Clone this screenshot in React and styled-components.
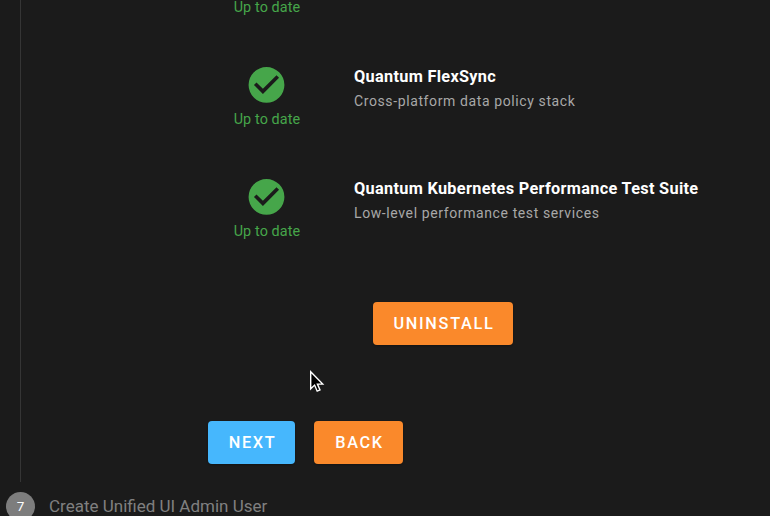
import React from "react";
import styled, { createGlobalStyle } from "styled-components";

const GlobalStyle = createGlobalStyle`
  * {
    box-sizing: border-box;
  }

  body {
    margin: 0;
    overflow: hidden;
    background: #1b1b1b;
    font-family: Roboto, "Liberation Sans", sans-serif;
  }
`

const Page = styled.main`
  position: relative;
  height: 516px;
  overflow: hidden;
  display: flex;
  flex-direction: column;
  background: #1b1b1b;
`

const StepContent = styled.section`
  height: 482px;
  flex: none;
  margin-left: 20px;
  border-left: 1px solid #353535;
  display: flex;
  flex-direction: column;
`

const ServiceList = styled.div`
  margin-top: -65px;
`

const ServiceRow = styled.div`
  height: 112px;
  display: grid;
  grid-template-columns: 120px 1fr;
  column-gap: 27px;
  padding-left: 186px;
`

const Status = styled.div`
  display: flex;
  flex-direction: column;
  align-items: center;
  padding-top: 16.3px;
  color: #46a64a;
`

const StatusIcon = styled.svg`
  width: 43px;
  height: 43px;
  flex: none;
  margin-right: 1px;
  fill: currentColor;
`

const StatusLabel = styled.span`
  margin-top: 3.7px;
  font-size: 14.4px;
  line-height: 20px;
  letter-spacing: 0.1px;
`

const Details = styled.div`
  padding-top: 18px;
`

const ServiceName = styled.h3`
  margin: 0;
  font-size: 16.3px;
  font-weight: 700;
  line-height: 24px;
  letter-spacing: 0.31px;
  color: #fff;
`

const ServiceText = styled.p`
  margin: 1px 0 0;
  font-size: 14px;
  line-height: 22px;
  letter-spacing: 0.61px;
  color: #a8a8a8;
`

const Button = styled.button`
  width: ${({ $width }) => $width}px;
  height: 43px;
  padding: 0 0 0 2px;
  border: 0;
  border-radius: 4px;
  background: ${({ $color }) => $color};
  box-shadow: 0 1px 2px rgba(0, 0, 0, 0.3);
  color: #fff;
  font-family: inherit;
  font-size: 16.3px;
  font-weight: 500;
  letter-spacing: 1.7px;
`

const ServiceActions = styled.div`
  padding: 31px 0 0 352px;
`

const StepActions = styled.div`
  display: flex;
  gap: 19px;
  padding: 76px 0 0 187px;
`

const StepHeader = styled.header`
  display: flex;
  align-items: center;
  gap: 14px;
  height: 29px;
  margin: 10px 0 0 6px;
  flex: none;
`

const StepNumber = styled.span`
  display: flex;
  align-items: center;
  justify-content: center;
  width: 29px;
  height: 29px;
  padding-bottom: 2px;
  border-radius: 50%;
  background: #7d7d7d;
  color: #fff;
  font-size: 13.5px;
`

const StepTitle = styled.span`
  padding-bottom: 2px;
  font-size: 17px;
  line-height: 20px;
  color: #808080;
`

const Cursor = styled.svg`
  position: absolute;
  left: 309px;
  top: 370px;
  width: 16px;
  height: 24px;
`

const services = [
  { id: "previous" },
  { id: "flexsync", name: "Quantum FlexSync", text: "Cross-platform data policy stack" },
  {
    id: "kubernetes",
    name: "Quantum Kubernetes Performance Test Suite",
    text: "Low-level performance test services",
  },
]

const Service = ({ name, text }) => (
  <ServiceRow>
    <Status>
      <StatusIcon viewBox="0 -0.25 24 24">
        <path d="M12 2a10 10 0 1 0 0 20 10 10 0 0 0 0-20M10 17l-5-5 1.41-1.41L10 14.17l7.59-7.59L19 8z" fillRule="evenodd" />
      </StatusIcon>
      <StatusLabel>Up to date</StatusLabel>
    </Status>
    {name && (
      <Details>
        <ServiceName>{name}</ServiceName>
        <ServiceText>{text}</ServiceText>
      </Details>
    )}
  </ServiceRow>
)

const App = () => (
  <>
    <GlobalStyle />
    <Page>
      <StepContent>
        <ServiceList>
          {services.map(({ id, name, text }) => (
            <Service key={id} name={name} text={text} />
          ))}
        </ServiceList>
        <ServiceActions>
          <Button $width={140} $color="#fa892b">UNINSTALL</Button>
        </ServiceActions>
        <StepActions>
          <Button $width={87} $color="#46b7fd">NEXT</Button>
          <Button $width={89} $color="#fa892b">BACK</Button>
        </StepActions>
      </StepContent>
      <StepHeader>
        <StepNumber>7</StepNumber>
        <StepTitle>Create Unified UI Admin User</StepTitle>
      </StepHeader>
      <Cursor viewBox="0 0 16 24">
        <path
          d="M1.7 1.8v17l3.9-3.7 2.6 6.1 2.8-1.2-2.6-5.9h5.3z"
          fill="#000"
          stroke="#fff"
          strokeWidth="1.4"
        />
      </Cursor>
    </Page>
  </>
)

export default App
